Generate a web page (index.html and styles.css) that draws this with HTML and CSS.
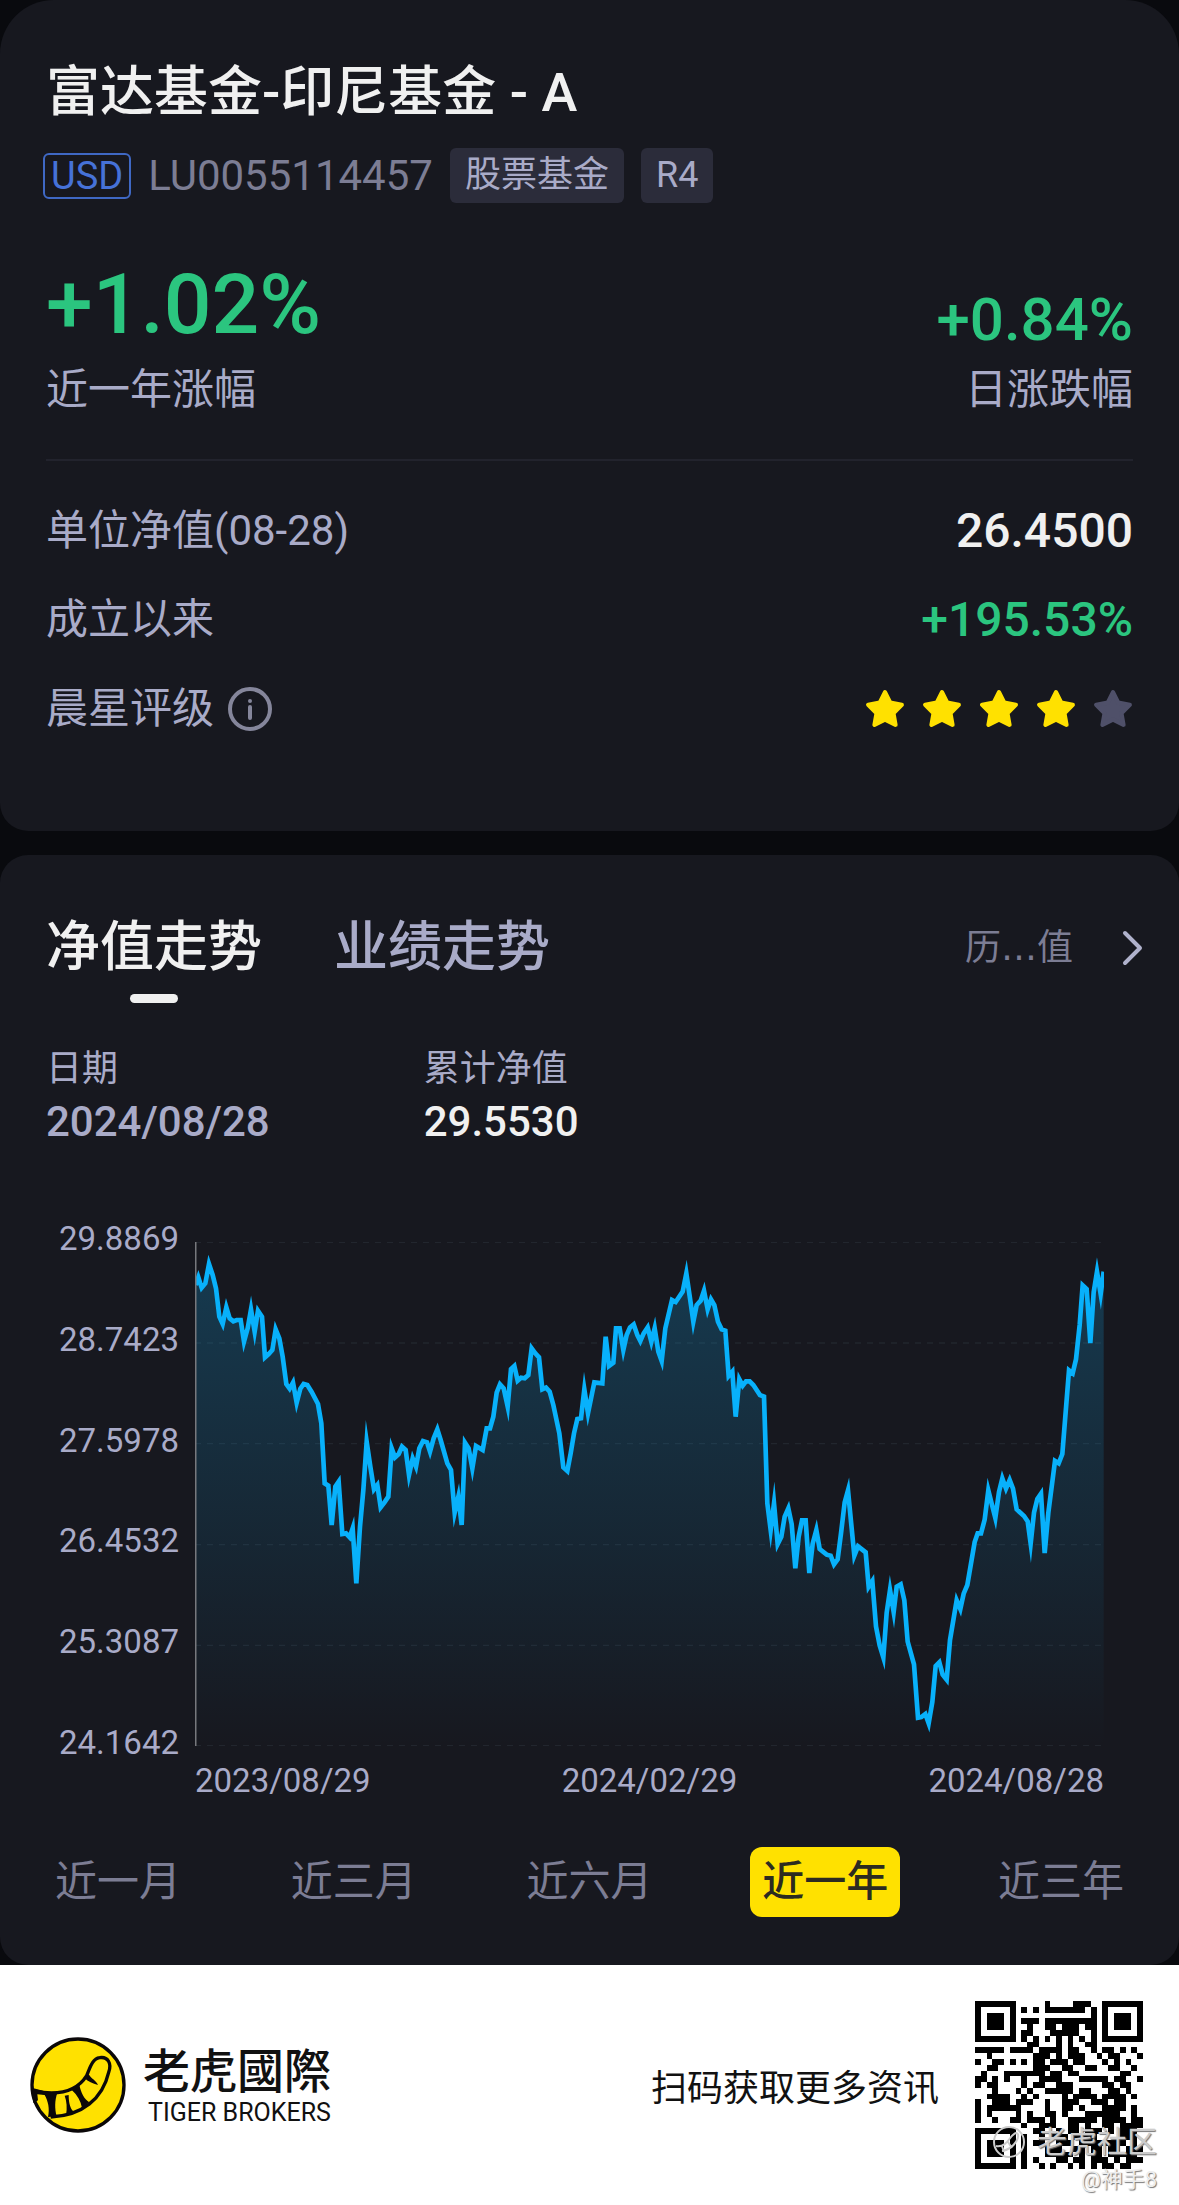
FILE: index.html
```html
<!DOCTYPE html>
<html lang="zh-CN">
<head>
<meta charset="utf-8">
<meta name="viewport" content="width=device-width, initial-scale=1">
<title>富达基金-印尼基金 - A</title>
<link rel="stylesheet" href="styles.css">
</head>
<body>
<main class="page">
  <section class="card summary">
    <h1 class="fund-name">富达基金-印尼基金 - A</h1>
    <div class="meta">
      <span class="currency">USD</span>
      <span class="isin">LU0055114457</span>
      <span class="tag">股票基金</span>
      <span class="tag">R4</span>
    </div>
    <div class="returns">
      <div class="return">
        <strong class="return-main">+1.02%</strong>
        <span class="label">近一年涨幅</span>
      </div>
      <div class="return return-right">
        <strong class="return-day">+0.84%</strong>
        <span class="label">日涨跌幅</span>
      </div>
    </div>
    <dl class="facts">
      <div class="fact"><dt>单位净值(08-28)</dt><dd>26.4500</dd></div>
      <div class="fact"><dt>成立以来</dt><dd class="up">+195.53%</dd></div>
      <div class="fact">
        <dt>晨星评级
          <button class="info" type="button" aria-label="评级说明">
            <svg viewBox="0 0 44 44" width="44" height="44"><circle cx="22" cy="22" r="20" fill="none" stroke="currentColor" stroke-width="4"/><circle cx="22" cy="14" r="2" fill="currentColor"/><path d="M22 20v11" stroke="currentColor" stroke-width="4" stroke-linecap="round"/></svg>
          </button>
        </dt>
        <dd class="stars" aria-label="4 / 5">
          <svg class="star" viewBox="0 0 38 38"><path d="M19 3l5 10 11 2-8 8 2 11-10-5-10 5 2-11-8-8 11-2z"/></svg>
          <svg class="star" viewBox="0 0 38 38"><path d="M19 3l5 10 11 2-8 8 2 11-10-5-10 5 2-11-8-8 11-2z"/></svg>
          <svg class="star" viewBox="0 0 38 38"><path d="M19 3l5 10 11 2-8 8 2 11-10-5-10 5 2-11-8-8 11-2z"/></svg>
          <svg class="star" viewBox="0 0 38 38"><path d="M19 3l5 10 11 2-8 8 2 11-10-5-10 5 2-11-8-8 11-2z"/></svg>
          <svg class="star star-off" viewBox="0 0 38 38"><path d="M19 3l5 10 11 2-8 8 2 11-10-5-10 5 2-11-8-8 11-2z"/></svg>
        </dd>
      </div>
    </dl>
  </section>

  <section class="card trend">
    <div class="trend-head">
      <div class="tabs">
        <button class="tab tab-active" type="button">净值走势</button>
        <button class="tab" type="button">业绩走势</button>
      </div>
      <a class="history" href="#history"><span>历<span class="dots">…</span>值</span>
        <svg viewBox="0 0 24 40" width="24" height="40"><path d="M4 5l15 15L4 35" fill="none" stroke="#b0b2cc" stroke-width="4" stroke-linecap="round" stroke-linejoin="round"/></svg>
      </a>
    </div>
    <dl class="readout">
      <div><dt>日期</dt><dd class="date">2024/08/28</dd></div>
      <div><dt>累计净值</dt><dd>29.5530</dd></div>
    </dl>
    <div class="chart">
      <div class="y-axis"><span>29.8869</span><span>28.7423</span><span>27.5978</span><span>26.4532</span><span>25.3087</span><span>24.1642</span></div>
      <svg class="plot" viewBox="45 66 2727 1512" role="img" aria-label="净值走势">
        <defs>
          <linearGradient id="fill" x1="0" y1="0" x2="0" y2="1"><stop offset="0" stop-color="#12a0e0" stop-opacity=".25"/><stop offset="1" stop-color="#12a0e0" stop-opacity="0"/></linearGradient>
        </defs>
        <path class="grid" d="M45 67H2772M45 369H2772M45 671H2772M45 974H2772M45 1276H2772M45 1577H2772"/>
        <path fill="url(#fill)" d="M47 1578V195L55 172 65 203 76 190 87 132 98 165 108 205 118 290 128 312 139 262 149 295 160 304 170 300 182 300 192 365 203 325 213 268 224 335 234 272 246 290 255 412 266 402 277 390 287 328 298 355 308 410 319 492 329 506 339 488 350 548 361 506 371 492 382 495 395 516 414 552 424 610 434 790 445 797 455 915 466 800 476 785 487 942 498 940 509 952 518 925 529 1090 540 920 550 810 560 665 571 740 582 808 592 795 602 862 613 848 625 830 635 685 645 712 656 702 666 680 677 690 687 765 698 715 708 740 718 685 729 663 741 667 750 695 761 655 772 628 782 660 802 730 813 750 824 878 835 830 845 915 855 668 866 685 877 745 888 678 908 690 920 625 930 625 940 590 950 518 960 493 971 505 983 560 993 447 1003 438 1013 482 1023 473 1034 475 1045 465 1055 385 1066 400 1077 412 1087 508 1098 503 1109 515 1120 555 1138 640 1150 742 1162 753 1172 700 1182 640 1192 597 1203 595 1213 508 1224 580 1243 487 1267 490 1277 350 1287 438 1300 428 1308 325 1319 325 1330 390 1340 345 1350 322 1361 313 1372 345 1381 363 1391 340 1403 322 1414 365 1424 325 1435 395 1445 423 1456 325 1476 240 1487 246 1508 215 1519 160 1530 235 1540 305 1550 255 1562 242 1572 212 1583 268 1593 238 1603 255 1614 305 1625 328 1636 332 1646 468 1657 455 1667 590 1678 478 1688 497 1698 484 1709 484 1720 495 1740 525 1752 530 1762 850 1772 930 1782 850 1793 972 1804 950 1814 890 1825 865 1835 912 1846 1045 1856 950 1866 901 1877 901 1888 1059 1898 971 1909 930 1919 987 1940 1004 1952 1007 1962 1033 1973 1018 1983 940 1994 847 2004 811 2015 925 2023 1007 2034 979 2057 997 2066 1100 2077 1083 2088 1219 2099 1276 2110 1312 2120 1178 2130 1110 2141 1176 2150 1100 2162 1093 2173 1141 2183 1265 2202 1333 2214 1493 2224 1491 2236 1482 2246 1510 2257 1446 2267 1338 2278 1327 2288 1364 2300 1379 2310 1260 2330 1141 2341 1167 2351 1121 2362 1095 2384 966 2393 940 2403 940 2414 899 2425 811 2446 894 2457 816 2467 775 2478 806 2489 780 2499 806 2510 868 2532 888 2543 904 2552 971 2562 878 2572 837 2583 821 2594 999 2605 878 2625 723 2636 730 2647 702 2667 451 2678 460 2688 418 2699 315 2708 196 2720 207 2731 369 2741 217 2751 155 2762 222 2771 155V1578z"/>
        <path class="line" d="M47 195L55 172 65 203 76 190 87 132 98 165 108 205 118 290 128 312 139 262 149 295 160 304 170 300 182 300 192 365 203 325 213 268 224 335 234 272 246 290 255 412 266 402 277 390 287 328 298 355 308 410 319 492 329 506 339 488 350 548 361 506 371 492 382 495 395 516 414 552 424 610 434 790 445 797 455 915 466 800 476 785 487 942 498 940 509 952 518 925 529 1090 540 920 550 810 560 665 571 740 582 808 592 795 602 862 613 848 625 830 635 685 645 712 656 702 666 680 677 690 687 765 698 715 708 740 718 685 729 663 741 667 750 695 761 655 772 628 782 660 802 730 813 750 824 878 835 830 845 915 855 668 866 685 877 745 888 678 908 690 920 625 930 625 940 590 950 518 960 493 971 505 983 560 993 447 1003 438 1013 482 1023 473 1034 475 1045 465 1055 385 1066 400 1077 412 1087 508 1098 503 1109 515 1120 555 1138 640 1150 742 1162 753 1172 700 1182 640 1192 597 1203 595 1213 508 1224 580 1243 487 1267 490 1277 350 1287 438 1300 428 1308 325 1319 325 1330 390 1340 345 1350 322 1361 313 1372 345 1381 363 1391 340 1403 322 1414 365 1424 325 1435 395 1445 423 1456 325 1476 240 1487 246 1508 215 1519 160 1530 235 1540 305 1550 255 1562 242 1572 212 1583 268 1593 238 1603 255 1614 305 1625 328 1636 332 1646 468 1657 455 1667 590 1678 478 1688 497 1698 484 1709 484 1720 495 1740 525 1752 530 1762 850 1772 930 1782 850 1793 972 1804 950 1814 890 1825 865 1835 912 1846 1045 1856 950 1866 901 1877 901 1888 1059 1898 971 1909 930 1919 987 1940 1004 1952 1007 1962 1033 1973 1018 1983 940 1994 847 2004 811 2015 925 2023 1007 2034 979 2057 997 2066 1100 2077 1083 2088 1219 2099 1276 2110 1312 2120 1178 2130 1110 2141 1176 2150 1100 2162 1093 2173 1141 2183 1265 2202 1333 2214 1493 2224 1491 2236 1482 2246 1510 2257 1446 2267 1338 2278 1327 2288 1364 2300 1379 2310 1260 2330 1141 2341 1167 2351 1121 2362 1095 2384 966 2393 940 2403 940 2414 899 2425 811 2446 894 2457 816 2467 775 2478 806 2489 780 2499 806 2510 868 2532 888 2543 904 2552 971 2562 878 2572 837 2583 821 2594 999 2605 878 2625 723 2636 730 2647 702 2667 451 2678 460 2688 418 2699 315 2708 196 2720 207 2731 369 2741 217 2751 155 2762 222 2771 155"/>
        <path d="M47 66V1578" stroke="#77787d" stroke-width="5"/>
      </svg>
      <div class="x-axis"><span>2023/08/29</span><span>2024/02/29</span><span>2024/08/28</span></div>
    </div>
    <div class="periods">
      <button class="period" type="button">近一月</button>
      <button class="period" type="button">近三月</button>
      <button class="period" type="button">近六月</button>
      <button class="period period-active" type="button">近一年</button>
      <button class="period" type="button">近三年</button>
    </div>
  </section>
</main>

<footer class="footer">
  <div class="brand">
    <svg class="logo" viewBox="0 0 288 288"><circle cx="144" cy="144" r="138" fill="#ffe100" stroke="#0b0809" stroke-width="10"/><path d="M12 162C82 176 140 164 170 116C180 92 187 65 209 62C234 58 246 80 236 106C218 184 158 236 62 240" fill="none" stroke="#0b0809" stroke-width="10"/><path d="M5 152L56 166 82 168C74 190 74 215 80 238L54 240C60 215 54 192 44 174L22 172 24 190 10 198zM104 176L116 174C116 200 122 218 132 224L108 236C112 212 110 192 104 176zM126 160L148 142C152 168 164 188 178 196L156 212C152 192 142 174 126 160zM164 124L176 112C184 126 198 130 204 144C188 140 174 134 164 124z" fill="#0b0809"/></svg>
    <div class="brand-text">
      <span class="brand-zh" lang="zh-TW">老虎國際</span>
      <span class="brand-en">TIGER BROKERS</span>
    </div>
  </div>
  <div class="scan">
    <span class="scan-text">扫码获取更多资讯</span>
    <div class="qr-box">
      <svg class="qr" viewBox="0 0 29 29" shape-rendering="crispEdges" role="img" aria-label="二维码"><path stroke="#000" d="M0 .5h7m5 0h1m4 0h3m2 0h7M0 1.5h1m5 0h1m1 0h1m1 0h1m1 0h7m1 0h1m1 0h1m5 0h1M0 2.5h1m1 0h3m1 0h1m13 0h1m1 0h1m1 0h3m1 0h1M0 3.5h1m1 0h3m1 0h1m1 0h3m1 0h9m1 0h1m1 0h3m1 0h1M0 4.5h1m1 0h3m1 0h1m2 0h1m2 0h2m1 0h3m1 0h2m1 0h1m1 0h3m1 0h1M0 5.5h1m5 0h1m1 0h2m3 0h5m2 0h1m1 0h1m5 0h1M0 6.5h7m1 0h1m1 0h1m1 0h1m1 0h1m1 0h1m1 0h1m1 0h1m1 0h7M9 7.5h2m3 0h1m1 0h1m2 0h2M0 8.5h5m1 0h4m1 0h4m1 0h2m2 0h1m1 0h2m1 0h1m1 0h1M2 9.5h1m7 0h3m1 0h1m1 0h3m2 0h1m1 0h2m3 0h1M0 10.5h1m2 0h2m1 0h1m1 0h1m1 0h2m1 0h3m1 0h2m3 0h1m1 0h1m1 0h1M2 11.5h2m6 0h3m2 0h2m2 0h2m2 0h2m2 0h1M1 12.5h1m3 0h7m1 0h2m1 0h2m7 0h2M0 13.5h2m1 0h1m1 0h1m2 0h1m2 0h4m3 0h5m1 0h2m2 0h1M0 14.5h1m1 0h2m4 0h1m1 0h2m2 0h3m5 0h2m1 0h2M3 15.5h1m3 0h1m1 0h1m2 0h5m1 0h2m3 0h2m1 0h1M2 16.5h4m2 0h1m1 0h1m4 0h1m1 0h4m1 0h4m1 0h1M0 17.5h1m2 0h3m1 0h3m2 0h1m2 0h3m2 0h3m1 0h2m3 0h1M0 18.5h1m1 0h6m4 0h1m2 0h2m1 0h1m3 0h4m1 0h1M0 19.5h1m1 0h1m4 0h1m1 0h1m2 0h2m1 0h1m3 0h6m2 0h1M0 20.5h1m2 0h1m2 0h2m1 0h3m1 0h1m2 0h5m1 0h4m1 0h2M8 21.5h1m2 0h3m2 0h2m1 0h1m2 0h2m1 0h4M0 22.5h7m3 0h2m2 0h1m1 0h2m1 0h3m1 0h1m1 0h3M0 23.5h1m5 0h1m1 0h1m2 0h1m1 0h3m1 0h4m4 0h3M0 24.5h1m1 0h3m1 0h1m1 0h1m1 0h2m2 0h3m1 0h8m1 0h1M0 25.5h1m1 0h3m1 0h1m1 0h1m3 0h3m2 0h2m1 0h2m1 0h2m1 0h3M0 26.5h1m1 0h3m1 0h1m1 0h1m3 0h5m1 0h1m1 0h2m1 0h5M0 27.5h1m5 0h1m1 0h1m1 0h1m3 0h2m1 0h2m1 0h3m1 0h1m1 0h3M0 28.5h7m1 0h1m2 0h1m1 0h1m2 0h1m1 0h1m1 0h1m1 0h2m1 0h2"/></svg>
      <div class="watermark">
        <span class="mark-name"><svg viewBox="0 0 36 36" width="36" height="36" fill="none" stroke="#ccc" stroke-width="2"><circle cx="18" cy="18" r="15"/><path d="M5 22c12 2 14-12 20-13 6 1-1 16-14 18M11 22l2 6M17 18l4 6"/></svg>老虎社区</span>
        <span class="mark-user">@神手8</span>
      </div>
    </div>
  </div>
</footer>
</body>
</html>
```
FILE: styles.css
```css
* { box-sizing: border-box; }
body {
  margin: 0;
  background: #090a0e;
  color: #a9abc8;
  font-family: Roboto, "Noto Sans CJK SC", sans-serif;
}
button {
  margin: 0;
  padding: 0;
  border: 0;
  background: none;
  color: inherit;
  font: inherit;
}
dl, dd, h1 { margin: 0; }
svg { display: block; }

.page { display: grid; gap: 24px; }
.card { background: #17181f; border-radius: 28px; }

.summary {
  padding: 61px 46px 78px;
  border-radius: 54px 54px 28px 28px;
}
.fund-name {
  color: #f0f0f0;
  font-size: 54px;
  line-height: 64px;
  font-weight: 500;
}
.meta {
  display: flex;
  align-items: center;
  gap: 17px;
  margin-top: 23px;
}
.currency {
  margin-left: -3px;
  padding: 0 6px;
  border: 2px solid #3f68c4;
  border-radius: 6px;
  color: #4672d8;
  font-size: 38px;
  line-height: 42px;
}
.isin { color: #7c7d94; font-size: 42px; line-height: 52px; }
.tag {
  padding: 0 15px;
  border-radius: 6px;
  background: #2b2c3a;
  font-size: 36px;
  line-height: 55px;
}
.returns {
  display: flex;
  justify-content: space-between;
  align-items: flex-end;
  margin-top: 60px;
  padding-bottom: 43px;
  border-bottom: 2px solid #22232d;
}
.return { display: grid; gap: 17px; }
.return-right { gap: 14px; text-align: right; }
.return-main, .return-day { color: #2bc57f; font-weight: 500; }
.return-main { font-size: 84px; line-height: 84px; }
.return-day { font-size: 60px; line-height: 60px; }
.label { font-size: 42px; line-height: 52px; }

.facts { margin-top: 25px; }
.fact {
  display: flex;
  justify-content: space-between;
  align-items: center;
  font-size: 42px;
  line-height: 89px;
}
.fact dt { display: flex; align-items: center; gap: 14px; }
.fact dd { color: #f0f0f0; font-size: 48px; font-weight: 500; }
.fact .up { color: #2bc57f; }
.info { color: #85869b; }
.stars { display: flex; gap: 17px; }
.star {
  width: 40px;
  height: 40px;
  fill: #ffe100;
  stroke: #ffe100;
  stroke-width: 4;
  stroke-linejoin: round;
}
.star-off { fill: #4f5069; stroke: #4f5069; }

.trend { padding: 61px 0 48px; }
.trend-head {
  display: flex;
  justify-content: space-between;
  align-items: flex-start;
  padding: 0 34px 0 46px;
}
.tabs { display: flex; gap: 72px; }
.tab {
  display: grid;
  justify-items: center;
  align-content: start;
  gap: 14px;
  font-size: 54px;
  line-height: 64px;
  font-weight: 500;
}
.tab-active { color: #f0f0f0; }
.tab-active::after {
  content: "";
  width: 48px;
  height: 9px;
  border-radius: 5px;
  background: #f0f0f0;
}
.history {
  display: flex;
  align-items: center;
  gap: 48px;
  color: #7c7d94;
  font-size: 36px;
  line-height: 64px;
  text-decoration: none;
}
.dots { font-family: "DejaVu Sans", sans-serif; }
.readout {
  display: grid;
  grid-template-columns: 1fr 2fr;
  margin-top: 41px;
  padding-left: 46px;
}
.readout dt { font-size: 36px; line-height: 50px; }
.readout dd {
  color: #f0f0f0;
  font-size: 42px;
  line-height: 56px;
  font-weight: 500;
}
.readout .date { color: #a9abc8; }

.chart {
  display: grid;
  grid-template-columns: 179px 1fr;
  column-gap: 16px;
  margin-top: 92px;
  padding-right: 75px;
  font-size: 33px;
}
.y-axis {
  display: flex;
  flex-direction: column;
  justify-content: space-between;
  margin: -23px 0 -17px;
  line-height: 40px;
  text-align: right;
}
.plot { width: 100%; height: auto; }
.grid { stroke: #22262e; stroke-width: 4; stroke-dasharray: 18 18; }
.line { fill: none; stroke: #08b1fb; stroke-width: 14; stroke-miterlimit: 10; }
.x-axis {
  grid-column: 2;
  display: flex;
  justify-content: space-between;
  margin-top: 15px;
  line-height: 40px;
}
.periods {
  display: flex;
  justify-content: space-between;
  margin-top: 46px;
  padding: 0 43px;
}
.period {
  padding: 0 12px;
  border-radius: 12px;
  color: #7c7d94;
  font-size: 42px;
  line-height: 70px;
}
.period-active { background: #ffe100; color: #2c2b20; font-weight: 500; }

.footer {
  display: flex;
  justify-content: space-between;
  align-items: center;
  padding: 36px;
  padding-left: 30px;
  background: #fff;
  color: #111;
}
.brand { display: flex; align-items: center; gap: 17px; }
.logo { width: 96px; height: 96px; }
.brand-text { display: grid; gap: 4px; }
.brand-zh {
  font-family: "Noto Sans CJK TC", sans-serif;
  font-size: 47px;
  line-height: 52px;
  font-weight: 500;
}
.brand-en { padding-left: 5px; font-size: 25px; line-height: 30px; }
.scan { display: flex; align-items: center; gap: 36px; }
.scan-text { font-size: 36px; }
.qr-box { position: relative; }
.qr { width: 168px; height: 168px; }
.watermark {
  position: absolute;
  right: -14px;
  bottom: -28px;
  display: grid;
  justify-items: end;
  color: #eee;
  text-shadow: 1px 1px 1px #777;
  white-space: nowrap;
}
.mark-name {
  display: flex;
  align-items: center;
  gap: 10px;
  font-size: 30px;
  line-height: 42px;
  color: #ccc;
}
.mark-user { font-size: 22px; line-height: 34px; }
```
